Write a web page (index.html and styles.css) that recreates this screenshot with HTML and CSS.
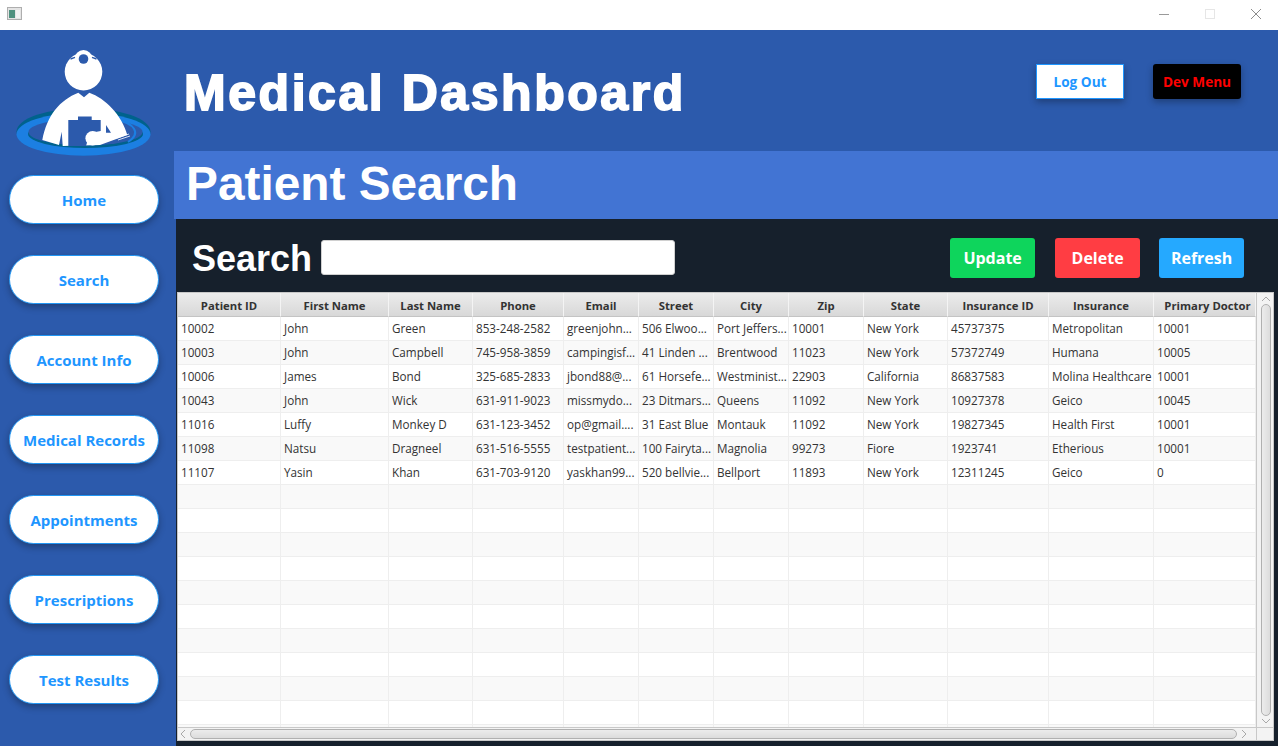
FILE: index.html
```html
<!DOCTYPE html>
<html lang="en">
<head>
<meta charset="utf-8">
<title>Medical Dashboard</title>
<link rel="stylesheet" href="styles.css">
</head>
<body>
<div class="titlebar">
  <svg class="app-icon" width="16" height="14" viewBox="0 0 16 14"><rect x="0.5" y="0.5" width="14" height="12" fill="#e4e4e4" stroke="#aeaeae"/><rect x="2" y="3" width="6" height="8" fill="#4f917f"/><rect x="9" y="3" width="4" height="8" fill="#f2f2f2"/></svg>
  <div class="win-controls">
    <svg width="14" height="14" viewBox="0 0 14 14"><path d="M2 7.5H12" stroke="#9a9a9a" fill="none"/></svg>
    <svg width="14" height="14" viewBox="0 0 14 14"><rect x="2.5" y="2.5" width="9" height="9" stroke="#e6e6e6" fill="none"/></svg>
    <svg width="14" height="14" viewBox="0 0 14 14"><path d="M2 2L12 12M12 2L2 12" stroke="#8c8c8c" fill="none"/></svg>
  </div>
</div>
<div class="app">
  <aside class="sidebar">
    <svg class="logo" width="174" height="145" viewBox="0 0 174 145">
      <ellipse cx="83.5" cy="101.7" rx="67" ry="23.5" fill="#00628c"/>
      <ellipse cx="83.5" cy="104.2" rx="67" ry="21.5" fill="#1c7fe2"/>
      <ellipse cx="85.5" cy="104" rx="57.5" ry="14" fill="#00628c"/>
      <ellipse cx="85.5" cy="102" rx="57" ry="13.5" fill="#2c5aac"/>
      <path d="M116 90C134 93 142 103 128 112" stroke="#1c7fe2" stroke-width="2" fill="none"/>
      <path d="M78.3 62.7L84 67.3L89.3 62.7C105 68 122 85 127.3 105L100 115L62.7 116L61.7 101.7L59 115L42.3 110C47 85 60 70 78.3 62.7Z" fill="#fff"/>
      <path d="M68.3 116V90H78V86.5H91.7V90H100.7V101L90 103L86 116Z" fill="#2c5aac"/>
      <circle cx="92.7" cy="108.3" r="7.3" fill="#fff"/>
      <path d="M106 95L111 102.7H106Z" fill="#2c5aac"/>
      <path d="M117 108L129 104M118 110L130 106" stroke="#fff" fill="none" stroke-width="0.8"/>
      <circle cx="83.5" cy="41.7" r="18.8" fill="#fff"/>
      <circle cx="83.5" cy="29" r="9" fill="#fff"/>
      <circle cx="83.5" cy="29" r="4.8" fill="#2c5aac"/>
      <path d="M70.5 29L75 27.3M96.5 29L92 27.3" stroke="#2c5aac" stroke-width="1.4" fill="none"/>
    </svg>
    <nav class="nav">
      <a class="nav-btn">Home</a>
      <a class="nav-btn">Search</a>
      <a class="nav-btn">Account Info</a>
      <a class="nav-btn">Medical Records</a>
      <a class="nav-btn">Appointments</a>
      <a class="nav-btn">Prescriptions</a>
      <a class="nav-btn">Test Results</a>
    </nav>
  </aside>
  <main class="main">
    <header class="header">
      <h1 class="app-title">Medical Dashboard</h1>
      <button class="btn-logout">Log Out</button>
      <button class="btn-dev">Dev Menu</button>
    </header>
    <div class="band"><h2 class="page-title">Patient Search</h2></div>
    <section class="panel">
      <div class="searchbar">
        <label class="search-label">Search</label>
        <input class="search-input" type="text">
        <div class="actions">
          <button class="action green">Update</button>
          <button class="action red">Delete</button>
          <button class="action blue">Refresh</button>
        </div>
      </div>
      <div class="table-frame">
        <div class="table-top">
          <div class="table-clip">
            <table class="grid">
              <colgroup>
                <col class="c1"><col class="c2"><col class="c3"><col class="c4"><col class="c5"><col class="c6"><col class="c7"><col class="c8"><col class="c9"><col class="c10"><col class="c11"><col class="c12">
              </colgroup>
              <thead>
                <tr><th>Patient ID</th><th>First Name</th><th>Last Name</th><th>Phone</th><th>Email</th><th>Street</th><th>City</th><th>Zip</th><th>State</th><th>Insurance ID</th><th>Insurance</th><th class="th-last">Primary Doctor</th></tr>
              </thead>
              <tbody>
                <tr><td>10002</td><td>John</td><td>Green</td><td>853-248-2582</td><td>greenjohn...</td><td>506 Elwoo...</td><td>Port Jeffers...</td><td>10001</td><td>New York</td><td>45737375</td><td>Metropolitan</td><td>10001</td></tr>
                <tr><td>10003</td><td>John</td><td>Campbell</td><td>745-958-3859</td><td>campingisf...</td><td>41 Linden ...</td><td>Brentwood</td><td>11023</td><td>New York</td><td>57372749</td><td>Humana</td><td>10005</td></tr>
                <tr><td>10006</td><td>James</td><td>Bond</td><td>325-685-2833</td><td>jbond88@...</td><td>61 Horsefe...</td><td>Westminist...</td><td>22903</td><td>California</td><td>86837583</td><td>Molina Healthcare</td><td>10001</td></tr>
                <tr><td>10043</td><td>John</td><td>Wick</td><td>631-911-9023</td><td>missmydo...</td><td>23 Ditmars...</td><td>Queens</td><td>11092</td><td>New York</td><td>10927378</td><td>Geico</td><td>10045</td></tr>
                <tr><td>11016</td><td>Luffy</td><td>Monkey D</td><td>631-123-3452</td><td>op@gmail....</td><td>31 East Blue</td><td>Montauk</td><td>11092</td><td>New York</td><td>19827345</td><td>Health First</td><td>10001</td></tr>
                <tr><td>11098</td><td>Natsu</td><td>Dragneel</td><td>631-516-5555</td><td>testpatient...</td><td>100 Fairyta...</td><td>Magnolia</td><td>99273</td><td>Fiore</td><td>1923741</td><td>Etherious</td><td>10001</td></tr>
                <tr><td>11107</td><td>Yasin</td><td>Khan</td><td>631-703-9120</td><td>yaskhan99...</td><td>520 bellvie...</td><td>Bellport</td><td>11893</td><td>New York</td><td>12311245</td><td>Geico</td><td>0</td></tr>
                <tr><td></td><td></td><td></td><td></td><td></td><td></td><td></td><td></td><td></td><td></td><td></td><td></td></tr>
                <tr><td></td><td></td><td></td><td></td><td></td><td></td><td></td><td></td><td></td><td></td><td></td><td></td></tr>
                <tr><td></td><td></td><td></td><td></td><td></td><td></td><td></td><td></td><td></td><td></td><td></td><td></td></tr>
                <tr><td></td><td></td><td></td><td></td><td></td><td></td><td></td><td></td><td></td><td></td><td></td><td></td></tr>
                <tr><td></td><td></td><td></td><td></td><td></td><td></td><td></td><td></td><td></td><td></td><td></td><td></td></tr>
                <tr><td></td><td></td><td></td><td></td><td></td><td></td><td></td><td></td><td></td><td></td><td></td><td></td></tr>
                <tr><td></td><td></td><td></td><td></td><td></td><td></td><td></td><td></td><td></td><td></td><td></td><td></td></tr>
                <tr><td></td><td></td><td></td><td></td><td></td><td></td><td></td><td></td><td></td><td></td><td></td><td></td></tr>
                <tr><td></td><td></td><td></td><td></td><td></td><td></td><td></td><td></td><td></td><td></td><td></td><td></td></tr>
                <tr><td></td><td></td><td></td><td></td><td></td><td></td><td></td><td></td><td></td><td></td><td></td><td></td></tr>
                <tr><td></td><td></td><td></td><td></td><td></td><td></td><td></td><td></td><td></td><td></td><td></td><td></td></tr>
              </tbody>
            </table>
          </div>
          <div class="vscroll">
            <svg class="arrow" width="10" height="6" viewBox="0 0 10 6"><path d="M1 5L5 1L9 5" stroke="#a8a8a8" fill="none"/></svg>
            <div class="vthumb"></div>
            <svg class="arrow" width="10" height="6" viewBox="0 0 10 6"><path d="M1 1L5 5L9 1" stroke="#a8a8a8" fill="none"/></svg>
          </div>
        </div>
        <div class="hscroll">
          <svg class="arrow" width="6" height="10" viewBox="0 0 6 10"><path d="M5 1L1 5L5 9" stroke="#a8a8a8" fill="none"/></svg>
          <div class="hthumb"></div>
          <svg class="arrow" width="6" height="10" viewBox="0 0 6 10"><path d="M1 1L5 5L1 9" stroke="#a8a8a8" fill="none"/></svg>
          <div class="corner"></div>
        </div>
      </div>
    </section>
  </main>
</div>
</body>
</html>
```
FILE: styles.css
```css
* { box-sizing: border-box; }
html, body { margin: 0; padding: 0; }
body {
  width: 1278px;
  height: 746px;
  overflow: hidden;
  background: #2c5aac;
  font-family: "Open Sans", "Noto Sans", sans-serif;
}
.titlebar {
  height: 30px;
  background: #fff;
  display: flex;
  align-items: center;
  justify-content: space-between;
  padding: 0 15px 2px 7px;
}
.win-controls { display: flex; gap: 32px; }
.app { display: flex; height: 716px; }
.sidebar { width: 174px; flex: none; }
.logo { display: block; }
.nav {
  display: flex;
  flex-direction: column;
  gap: 31px;
  padding-left: 9px;
}
.nav-btn {
  width: 150px;
  height: 49px;
  background: #fff;
  border: 1px solid #2196f3;
  border-radius: 25px;
  box-shadow: 0 3px 7px rgba(0, 0, 0, .3);
  color: #1e96ff;
  font-weight: 700;
  font-size: 15px;
  display: flex;
  align-items: center;
  justify-content: center;
  white-space: nowrap;
}
.main { flex: 1; display: flex; flex-direction: column; min-width: 0; }
.header {
  height: 121px;
  display: flex;
  align-items: flex-start;
  padding-left: 10px;
}
.app-title {
  margin: 33px 0 0;
  font: 700 50px/60px "Liberation Sans", Arial, sans-serif;
  color: #fff;
  width: 852px;
  letter-spacing: 2.55px;
  -webkit-text-stroke: 1.8px #fff;
  white-space: nowrap;
}
.btn-logout, .btn-dev {
  font-family: inherit;
  font-weight: 700;
  font-size: 13.6px;
  height: 35px;
  width: 88px;
  margin-top: 34px;
  padding: 0;
  box-shadow: 0 3px 7px rgba(0, 0, 0, .3);
}
.btn-logout { background: #fff; color: #1e96ff; border: 1px solid #1e96ff; }
.btn-dev {
  background: #000;
  color: #f00;
  border: 0;
  border-radius: 3px;
  margin-left: 29px;
}
.band {
  height: 68px;
  background: #4274d3;
  padding-left: 12px;
}
.page-title {
  margin: 0;
  font: 700 47.8px/66px "Liberation Sans", Arial, sans-serif;
  color: #fff;
  white-space: nowrap;
}
.panel {
  flex: 1;
  margin-left: 2px;
  background: #16202c;
  padding-bottom: 5px;
  display: flex;
  flex-direction: column;
  min-height: 0;
}
.searchbar {
  height: 73px;
  flex: none;
  display: flex;
  align-items: center;
  padding: 5px 0 0 16px;
}
.search-label {
  font: 700 36px/40px "Liberation Sans", Arial, sans-serif;
  color: #fff;
  margin: 1px 9px 0 0;
}
.search-input {
  width: 354px;
  height: 35px;
  background: #fff;
  border: 1px solid #d0d0d0;
  border-radius: 3px;
  padding: 0;
  margin-top: -2px;
}
.actions {
  display: flex;
  gap: 20px;
  margin-left: 275px;
  margin-top: -1px;
}
.action {
  width: 85px;
  height: 40px;
  border: 0;
  border-radius: 3px;
  color: #fff;
  font-family: inherit;
  font-weight: 700;
  font-size: 16px;
  padding: 0;
}
.green { background: #0ed55c; }
.red { background: #ff3d43; }
.blue { background: #25a9ff; margin-left: -1px; }
.table-frame {
  width: 1097px;
  margin-left: 1px;
  flex: 1;
  min-height: 0;
  background: #fff;
  border: 1px solid #c8c8c8;
  display: flex;
  flex-direction: column;
}
.table-top { flex: 1; display: flex; min-height: 0; }
.table-clip { flex: 1; overflow: hidden; min-width: 0; }
.grid {
  table-layout: fixed;
  border-collapse: separate;
  border-spacing: 0;
  width: 1078px;
  font-size: 11.7px;
  color: #333;
}
.c1 { width: 103px; } .c2 { width: 108px; } .c3 { width: 84px; } .c4 { width: 91px; }
.c5 { width: 75px; } .c6 { width: 75px; } .c7 { width: 75px; } .c8 { width: 75px; }
.c9 { width: 84px; } .c10 { width: 101px; } .c11 { width: 105px; } .c12 { width: 102px; }
th {
  height: 24px;
  padding: 2px 0 0;
  font-size: 11.3px;
  font-weight: 700;
  text-align: center;
  color: #333;
  background: linear-gradient(#ececec, #d8d8d8);
  border-right: 1px solid #f4f4f4;
  border-bottom: 1px solid #c4c4c4;
  white-space: nowrap;
  overflow: hidden;
}
.th-last { padding-left: 6px; }
td {
  height: 24px;
  padding: 0 3px 2px;
  border-right: 1px solid #eee;
  border-bottom: 1px solid #eee;
  white-space: nowrap;
  overflow: hidden;
}
tbody tr:nth-child(even) td { background: #f9f9f9; }
.vscroll {
  width: 17px;
  flex: none;
  background: #f3f3f3;
  border-left: 1px solid #c8c8c8;
  display: flex;
  flex-direction: column;
  align-items: center;
  gap: 2px;
  padding: 3px 0 3px 2px;
}
.vthumb {
  flex: 1;
  width: 10px;
  background: linear-gradient(90deg, #ececec, #dcdcdc);
  border: 1px solid #b0b0b0;
  border-radius: 5px;
}
.hscroll {
  height: 13px;
  flex: none;
  background: #f3f3f3;
  border-top: 1px solid #c8c8c8;
  display: flex;
  align-items: center;
  padding-left: 2px;
  gap: 4px;
}
.hthumb {
  flex: 1;
  height: 10px;
  background: linear-gradient(#ececec, #dcdcdc);
  border: 1px solid #b0b0b0;
  border-radius: 5px;
}
.corner {
  width: 17px;
  height: 12px;
  flex: none;
  border-left: 1px solid #c8c8c8;
  margin-left: 5px;
}
.arrow { flex: none; display: block; }
```
